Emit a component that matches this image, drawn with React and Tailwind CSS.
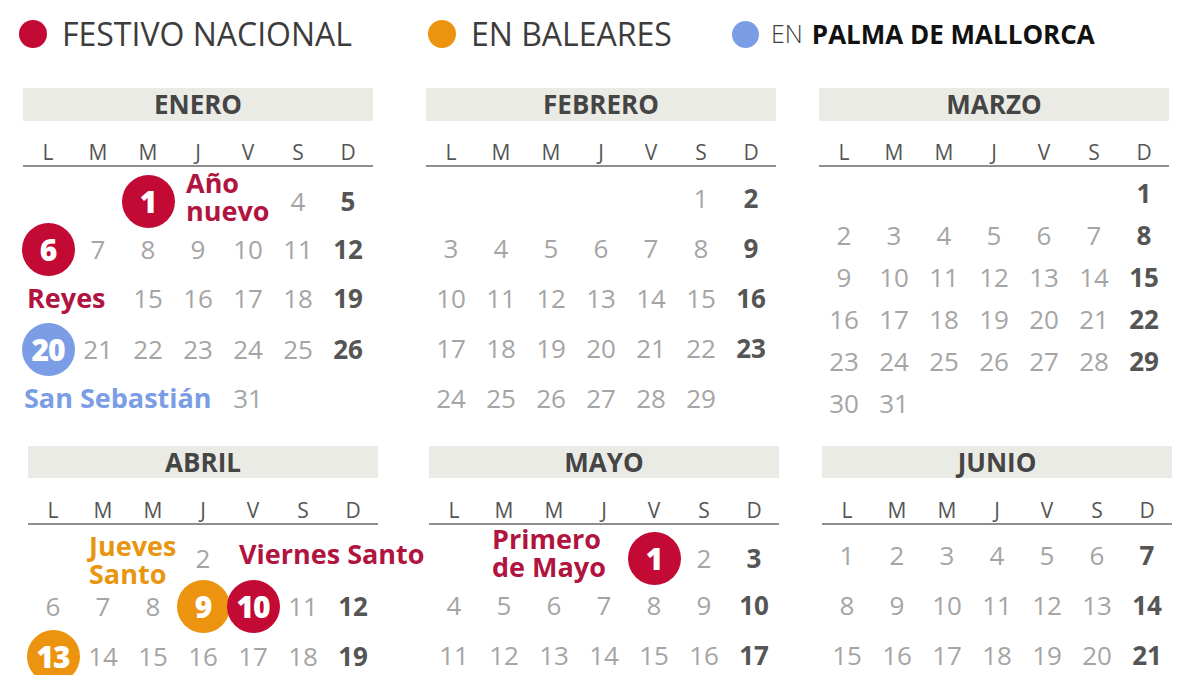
const RED = "bg-[#c20a34]";
const ORANGE = "bg-[#ec930f]";
const BLUE = "bg-[#7b9de6]";

// cell kinds: null = empty, number = day, {c: color, n} = circled day, {label, span, color, pl}
const months = [
  {
    name: "ENERO",
    rowH: "h-[50px]",
    rows: [
      [null, null, { c: RED, n: 1 }, { label: ["Año", "nuevo"], span: "col-span-2", color: "text-[#b1143f]", pl: "pl-[13px]", shift: "-translate-y-[4px]" }, 4, 5],
      [{ c: RED, n: 6 }, 7, 8, 9, 10, 11, 12],
      [{ label: ["Reyes"], span: "col-span-2", color: "text-[#b1143f]", pl: "pl-[4px]" }, 15, 16, 17, 18, 19],
      [{ c: BLUE, n: 20 }, 21, 22, 23, 24, 25, 26],
      [{ label: ["San Sebastián"], span: "col-span-4", color: "text-[#7b9de6]", pl: "pl-[1px]" }, 31, null, null],
    ],
  },
  {
    name: "FEBRERO",
    rowH: "h-[50px]",
    rows: [
      [null, null, null, null, null, 1, 2],
      [3, 4, 5, 6, 7, 8, 9],
      [10, 11, 12, 13, 14, 15, 16],
      [17, 18, 19, 20, 21, 22, 23],
      [24, 25, 26, 27, 28, 29, null],
    ],
  },
  {
    name: "MARZO",
    rowH: "h-[42px]",
    rows: [
      [null, null, null, null, null, null, 1],
      [2, 3, 4, 5, 6, 7, 8],
      [9, 10, 11, 12, 13, 14, 15],
      [16, 17, 18, 19, 20, 21, 22],
      [23, 24, 25, 26, 27, 28, 29],
      [30, 31, null, null, null, null, null],
    ],
  },
];

const months2 = [
  {
    name: "ABRIL",
    rowH: "h-[50px]",
    rows: [
      [null, { label: ["Jueves", "Santo"], span: "col-span-2", color: "text-[#e8950f]", pl: "pl-[11px]", shift: "translate-y-[2px]" }, 2, { label: ["Viernes Santo"], span: "col-span-3", color: "text-[#b1143f]", pl: "pl-[11px]", shift: "-translate-y-[4px]" }],
      [6, 7, 8, { c: ORANGE, n: 9 }, { c: RED, n: 10 }, 11, 12],
      [{ c: ORANGE, n: 13 }, 14, 15, 16, 17, 18, 19],
    ],
  },
  {
    name: "MAYO",
    rowH: "h-[50px]",
    rows: [
      [null, { label: ["Primero", "de Mayo"], span: "col-span-3", color: "text-[#b1143f]", pl: "pl-[13px]", shift: "-translate-y-[5px]" }, { c: RED, n: 1 }, 2, 3],
      [4, 5, 6, 7, 8, 9, 10],
      [11, 12, 13, 14, 15, 16, 17],
    ],
  },
  {
    name: "JUNIO",
    rowH: "h-[50px]",
    rows: [
      [1, 2, 3, 4, 5, 6, 7],
      [8, 9, 10, 11, 12, 13, 14],
      [15, 16, 17, 18, 19, 20, 21],
    ],
  },
];

const letters = ["L", "M", "M", "J", "V", "S", "D"];

function Cell({ cell, last }) {
  if (cell === null) return <div />;
  if (typeof cell === "number") {
    return (
      <div
        className={
          "flex items-center justify-center text-[26px] " +
          (last ? "font-bold text-[#555555]" : "font-normal text-[#a5a5a5]")
        }
      >
        {cell}
      </div>
    );
  }
  if (cell.c) {
    return (
      <div className="flex items-center justify-center">
        <div
          className={
            "flex shrink-0 items-center justify-center rounded-full w-[53px] h-[53px] text-[30px] font-extrabold tracking-[-1px] text-white " +
            cell.c
          }
        >
          {cell.n}
        </div>
      </div>
    );
  }
  return (
    <div className={"flex flex-col justify-center whitespace-nowrap " + cell.span}>
      <div className={"text-[27px] font-bold leading-[28px] " + cell.color + " " + cell.pl + " " + (cell.shift || "")}>
        {cell.label.map((l) => (
          <div key={l}>{l}</div>
        ))}
      </div>
    </div>
  );
}

function Month({ m, ml, bandH, lettersRow, rowsPt }) {
  return (
    <div className={"w-[350px] shrink-0 " + ml}>
      <div className={"flex items-center justify-center bg-[#ebebe6] text-[26px] font-bold text-[#454545] " + bandH}>
        {m.name}
      </div>
      <div className={"grid grid-cols-7 border-b-2 border-[#8e8e8e] " + lettersRow}>
        {letters.map((l, i) => (
          <div key={i} className="flex items-center justify-center text-[21px] text-[#555555]">
            {l}
          </div>
        ))}
      </div>
      <div className={m.name === "MARZO" ? "pt-[5px]" : rowsPt}>
        {m.rows.map((row, ri) => (
          <div key={ri} className={"grid grid-cols-7 " + m.rowH}>
            {row.map((cell, ci) => {
              // columna real de la celda, para poner el domingo en negrita
              let col = 0;
              for (let k = 0; k < ci; k++) {
                const c = row[k];
                if (c && c.span) col += parseInt(c.span.replace("col-span-", ""));
                else col += 1;
              }
              return <Cell key={ci} cell={cell} last={col === 6} />;
            })}
          </div>
        ))}
      </div>
    </div>
  );
}

export default function App() {
  return (
    <div className="w-[1200px] h-[675px] overflow-hidden bg-white font-['Open_Sans',sans-serif]">
      {/* Leyenda */}
      <div className="flex h-[88px] items-start pt-[20px] pl-[19px]">
        <div className="flex w-[409px] items-center h-[28px]">
          <span className={"w-[28px] h-[28px] rounded-full " + RED} />
          <span className="ml-[15px] text-[32px] font-normal text-[#3c3c3c]">FESTIVO NACIONAL</span>
        </div>
        <div className="flex w-[304px] items-center h-[28px]">
          <span className={"w-[28px] h-[28px] rounded-full " + ORANGE} />
          <span className="ml-[15px] text-[32px] font-normal text-[#3c3c3c]">EN BALEARES</span>
        </div>
        <div className="flex items-center h-[28px]">
          <span className={"w-[27px] h-[27px] rounded-full " + BLUE} />
          <span className="ml-[12px] text-[25px] font-light text-[#3c3c3c]">EN</span>
          <span className="ml-[9px] text-[26px] font-bold text-[#111111]">PALMA DE MALLORCA</span>
        </div>
      </div>

      {/* Enero - Marzo */}
      <div className="flex h-[358px]">
        <Month m={months[0]} ml="ml-[23px]" bandH="h-[33px]" lettersRow="h-[46px] pt-[16px]" rowsPt="pt-[6px]" />
        <Month m={months[1]} ml="ml-[53px]" bandH="h-[33px]" lettersRow="h-[46px] pt-[16px]" rowsPt="pt-[6px]" />
        <Month m={months[2]} ml="ml-[43px]" bandH="h-[33px]" lettersRow="h-[46px] pt-[16px]" rowsPt="pt-[6px]" />
      </div>

      {/* Abril - Junio */}
      <div className="flex">
        <Month m={months2[0]} ml="ml-[28px]" bandH="h-[32px]" lettersRow="h-[47px] pt-[17px]" rowsPt="pt-[5px]" />
        <Month m={months2[1]} ml="ml-[51px]" bandH="h-[32px]" lettersRow="h-[47px] pt-[17px]" rowsPt="pt-[5px]" />
        <Month m={months2[2]} ml="ml-[43px]" bandH="h-[32px]" lettersRow="h-[47px] pt-[17px]" rowsPt="pt-[5px]" />
      </div>
    </div>
  );
}
